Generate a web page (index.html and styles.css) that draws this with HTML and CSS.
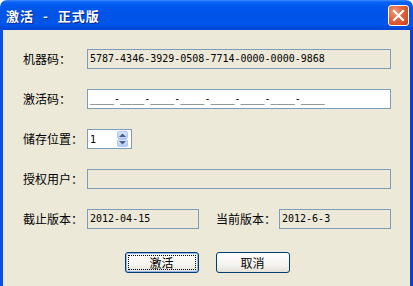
FILE: index.html
```html
<!DOCTYPE html>
<html lang="zh">
<head>
  <meta charset="UTF-8" />
  <title>激活 - 正式版</title>
  <link rel="stylesheet" href="styles.css">
</head>
<body>
  <div class="window">
    <div class="titlebar">
      <span class="title">激活 - 正式版</span>
      <span class="close">
        <svg width="13" height="13" viewBox="0 0 13 13">
          <path d="M2 2 L11 11 M11 2 L2 11" stroke="#fff" stroke-width="2.2" stroke-linecap="square" />
        </svg>
      </span>
    </div>

    <div class="body">
      <div class="row">
        <span class="lbl">机器码：</span>
        <div class="field ro">5787-4346-3929-0508-7714-0000-0000-9868</div>
      </div>

      <div class="row">
        <span class="lbl">激活码：</span>
        <div class="field mask">____-____-____-____-____-____-____-____</div>
      </div>

      <div class="row">
        <span class="lbl">储存位置：</span>
        <div class="spin">
          <span class="spin-val">1</span>
          <span class="spin-btns">
            <span class="spin-btn">
              <svg width="7" height="4" viewBox="0 0 7 4"><path d="M0 4 L3.5 0.5 L7 4 Z" fill="#4d6185" /></svg>
            </span>
            <span class="spin-btn">
              <svg width="7" height="4" viewBox="0 0 7 4"><path d="M0 0 L3.5 3.5 L7 0 Z" fill="#4d6185" /></svg>
            </span>
          </span>
        </div>
      </div>

      <div class="row">
        <span class="lbl">授权用户：</span>
        <div class="field ro"></div>
      </div>

      <div class="row">
        <span class="lbl">截止版本：</span>
        <div class="field ro short">2012-04-15</div>
        <span class="lbl lbl2">当前版本：</span>
        <div class="field ro short">2012-6-3</div>
      </div>

      <div class="buttons">
        <button class="btn default"><span class="focus">激活</span></button>
        <button class="btn">取消</button>
      </div>
    </div>
  </div>
</body>
</html>
```

FILE: styles.css
```css
html, body {
  margin: 0;
  padding: 0;
  background: #fff;
}
.window {
  width: 413px;
  height: 286px;
  display: flex;
  flex-direction: column;
  font-family: "Noto Sans CJK SC", "Liberation Sans", sans-serif;
  font-size: 12px;
  color: #000;
}
.titlebar {
  height: 30px;
  flex: none;
  display: flex;
  align-items: center;
  justify-content: space-between;
  padding: 0 4px 0 6px;
  border-radius: 7px 7px 0 0;
  background: linear-gradient(#3d8cff 0, #0a62f5 2px, #0058ee 6px, #0053e6 45%, #0055ea 80%, #0046d4 100%);
}
.title {
  color: #fff;
  font-weight: bold;
  font-size: 13px;
  letter-spacing: 1px;
  word-spacing: 5px;
  text-shadow: 1px 1px 0 #0a2a8a;
}
.close {
  width: 19px;
  height: 19px;
  display: flex;
  align-items: center;
  justify-content: center;
  border: 1px solid #fff;
  border-radius: 3px;
  background: radial-gradient(circle at 30% 30%, #f09a7a 0, #e2603a 45%, #c8421c 100%);
  margin-top: 1px;
}
.body {
  flex: 1;
  background: #ece9d8;
  border-left: 3px solid #0b50e6;
  border-right: 3px solid #0a3fcf;
  padding: 19px 19px 0 20px;
  display: flex;
  flex-direction: column;
  gap: 20px;
}
.row {
  height: 20px;
  display: flex;
  align-items: center;
}
.lbl {
  width: 64px;
  flex: none;
  line-height: 20px;
}
.lbl2 {
  margin-left: 17px;
  width: 63px;
}
.field {
  flex: 1;
  height: 20px;
  box-sizing: border-box;
  border: 1px solid #7f9db9;
  padding: 0 2px;
  font-family: "DejaVu Sans Mono", monospace;
  font-size: 10px;
  letter-spacing: 0;
  line-height: 18px;
  white-space: nowrap;
  overflow: hidden;
}
.ro {
  background: #ece9d8;
}
.mask {
  background: #fff;
}
.short {
  flex: none;
  width: 112px;
}
.spin {
  width: 45px;
  height: 20px;
  box-sizing: border-box;
  border: 1px solid #7f9db9;
  background: #fff;
  display: flex;
  align-items: center;
  padding: 0 3px 0 2px;
}
.spin-val {
  flex: 1;
  font-family: "DejaVu Sans Mono", monospace;
  font-size: 10px;
}
.spin-btns {
  display: flex;
  flex-direction: column;
  width: 11px;
  height: 16px;
}
.spin-btn {
  flex: 1;
  display: flex;
  align-items: center;
  justify-content: center;
  background: linear-gradient(#d9e5fd, #b8cdf7);
  border: 1px solid #b2c6f3;
  border-radius: 2px;
  box-sizing: border-box;
}
.buttons {
  display: flex;
  justify-content: center;
  gap: 17px;
  margin-top: 3px;
}
.btn {
  width: 74px;
  height: 21px;
  box-sizing: border-box;
  border: 1px solid #003c74;
  border-radius: 3px;
  background: linear-gradient(#fff 0, #f5f4f0 60%, #e3e1d8 100%);
  font-family: "Noto Sans CJK SC", sans-serif;
  font-size: 12px;
  color: #000;
  padding: 0;
  display: flex;
  align-items: center;
  justify-content: center;
}
.btn.default {
  box-shadow: inset 0 0 0 1px #98b8ea;
  padding: 2px;
}
.focus {
  flex: 1;
  align-self: stretch;
  display: flex;
  align-items: center;
  justify-content: center;
  border: 1px dotted #000;
}
```
